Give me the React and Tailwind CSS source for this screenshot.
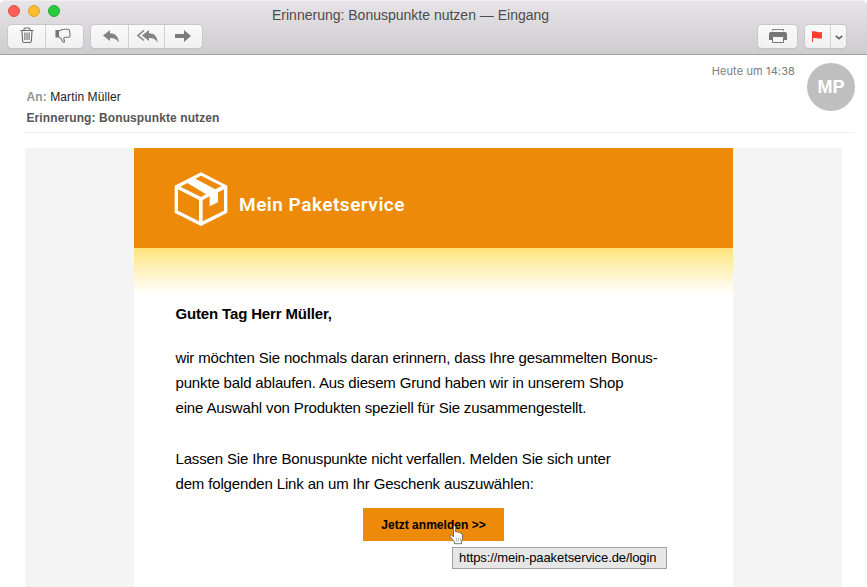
function ToolButton({ className, children }) {
  return <div className={`flex h-full justify-center ${className}`}>{children}</div>;
}

function Group({ className, children }) {
  return (
    <div className={`flex h-[23px] rounded-[4px] bg-gradient-to-b from-[#fbfafb] to-[#f1f0f1] shadow-[0_0_0_1px_#c9c7c9,0_1px_1px_#a9a7a9] ${className}`}>
      {children}
    </div>
  );
}

function Toolbar() {
  return (
    <header className="h-[55px] rounded-t-[5px] border-t border-b border-t-[#f1eff1] border-b-[#a3a1a3] bg-gradient-to-b from-[#e6e4e6] to-[#cfccd0]">
      <div className="flex h-6 items-start">
        <div className="flex w-[272px] gap-2 pt-1 pl-2">
          <span className="size-3 rounded-full border border-[#e2504a] bg-[#fd5e56]" />
          <span className="size-3 rounded-full border border-[#dfa032] bg-[#fdbd2e]" />
          <span className="size-3 rounded-full border border-[#1fae31] bg-[#28ca40]" />
        </div>
        <h1 className="pt-[5px] text-[14px] leading-[18px] whitespace-nowrap text-[#4c4b4c]">Erinnerung: Bonuspunkte nutzen — Eingang</h1>
      </div>
      <div className="flex pl-2">
        <Group className="w-[75px]">
          <ToolButton className="w-[38px] border-r border-[#d3d2d3] pt-[2px] pl-px">
            <svg width="16" height="18" viewBox="0 0 16 18" fill="none" stroke="#6b6b6b" strokeWidth="1.1">
              <path d="M1.500 3.500h13M5 3.500V2.200Q5 1 6.200 1H9.800Q11 1 11 2.200V3.500M3 3.500L3.600 14Q3.700 15.500 5 15.500H11Q12.300 15.500 12.400 14L13 3.500M5.900 5.500V13M8 5.500V13M10.100 5.500V13" />
            </svg>
          </ToolButton>
          <ToolButton className="w-[37px] pt-[3px] pr-[2px]">
            <svg width="17" height="16" viewBox="0 0 17 16" fill="none" stroke="#777" strokeWidth="1.1">
              <path d="M1 2.500H3.500V9H1Z" fill="#777" />
              <path d="M4 3Q7 1.200 9 1.200H13Q14.500 1.200 14.500 3L15.200 7.500Q15.200 9.200 13.500 9.200H10L8.600 10.500Q10 13 9.200 14.200Q8 14.500 7.200 12.700Q6 10 4 9" />
            </svg>
          </ToolButton>
        </Group>
        <Group className="ml-2 w-[111px]">
          <ToolButton className="w-[38px] border-r border-[#d3d2d3] pt-[5px] pl-[3px]">
            <svg width="16" height="13" viewBox="0 0 16 13" fill="#848384">
              <path d="M0 5.500L7 0V3.200C12.500 3.200 15.500 6.500 15.700 12.500C13.800 9.200 11.300 7.900 7 7.900V11Z" />
            </svg>
          </ToolButton>
          <ToolButton className="w-[36px] border-r border-[#d3d2d3] pt-[5px] pl-px">
            <svg width="21" height="13" viewBox="0 0 21 13" fill="#848384">
              <path d="M5 5.500L12 0V3.200C17.500 3.200 20.300 6.500 20.500 12.500C18.600 9.200 16.300 7.900 12 7.900V11Z" />
              <path d="M7 .5L1 5.500L7 10.500" fill="none" stroke="#848384" strokeWidth="1.500" />
            </svg>
          </ToolButton>
          <ToolButton className="w-[37px] pt-[5px] pr-[2px]">
            <svg width="16" height="12" viewBox="0 0 16 12" fill="#7b7a7b">
              <path d="M0 4H9V0L16 6L9 12V8H0Z" />
            </svg>
          </ToolButton>
        </Group>
        <Group className="ml-auto w-[39px]">
          <ToolButton className="w-full pt-[4px] pl-px">
            <svg width="18" height="15" viewBox="0 0 18 15">
              <path d="M3.500 2V.5H14.500V2" fill="none" stroke="#858485" />
              <path d="M2 3H16Q18 3 18 5V11H15V7H3V11H0V5Q0 3 2 3Z" fill="#777677" />
              <path d="M3.500 7.500H14.500V13.500H3.500Z" fill="#f8f8f8" stroke="#777677" />
            </svg>
          </ToolButton>
        </Group>
        <Group className="mr-[21px] ml-2 w-[41px]">
          <ToolButton className="w-[26px] border-r border-[#d3d2d3] pt-[6px]">
            <svg width="11" height="11" viewBox="0 0 11 11" fill="#ff3b30">
              <path d="M0 0H1V.5Q3-.2 5 .8Q7.500 1.800 10 1V7.300Q7.500 8.200 5 7.300Q3 6.600 1 7.200V11H0Z" />
            </svg>
          </ToolButton>
          <ToolButton className="w-[15px] pt-[10px]">
            <svg width="8" height="5" viewBox="0 0 8 5" fill="none" stroke="#666" strokeWidth="1.700">
              <path d="M.7 .8L4 3.700L7.300 .8" />
            </svg>
          </ToolButton>
        </Group>
      </div>
    </header>
  );
}

function MessageHeader() {
  return (
    <section className="mr-3 ml-6 flex h-[78px] border-b border-[#f1f1f1]">
      <div className="flex-1 pt-[33px] pl-[2.500px] text-[12px] leading-[18px] tracking-[0.1px] text-[#222]">
        <p><b className="text-[#949494]">An:</b> Martin Müller</p>
        <p className="mt-[3px] font-bold text-[#555]">Erinnerung: Bonuspunkte nutzen</p>
      </div>
      <time className='mr-3 pt-2 font-["Inter",sans-serif] text-[11px] leading-4 tracking-[0.12px] text-[#7b7b7b]'>Heute um 14:38</time>
      <div className="mt-2 flex size-12 items-center justify-center rounded-full bg-[#bfbfbf] pt-px text-[18px] font-bold text-white">MP</div>
    </section>
  );
}

function BoxLogo() {
  return (
    <svg width="54" height="54" viewBox="147 80 162 162">
      <path d="M228 81L307 121V202L228 242L149 202V121Z" fill="#fff" />
      <g fill="#ed8a0a">
        <path d="M159 132L222 164V228L159 196Z" />
        <path d="M233 164L254 153V183L279 171V141L297 132V196L233 228Z" />
        <path d="M166 124L187 113L243 147L228 155Z" />
        <path d="M211 100L228 91L290 122L271 132Z" />
      </g>
    </svg>
  );
}

function Mail() {
  return (
    <section className="mx-[25px] mt-[15px] h-[439px] bg-[#f4f4f4] px-[109px]">
      <div className="h-full bg-white">
        <div className="flex h-[100px] bg-[#ed8a0a] pt-6 pl-10">
          <BoxLogo />
          <span className='mt-[21px] ml-[11px] font-["Roboto",sans-serif] text-[19px] leading-6 font-semibold tracking-[0.5px] whitespace-nowrap text-white'>Mein Paketservice</span>
        </div>
        <div className="h-[47px] bg-gradient-to-b from-[#ffe47a] to-white" />
        <div className="h-[292px] pl-[41.500px] text-[15px] leading-[25px] tracking-[-0.155px] whitespace-nowrap text-black">
          <p className="pt-[6px] font-bold">Guten Tag Herr Müller,</p>
          <p className="mt-[19px]">wir möchten Sie nochmals daran erinnern, dass Ihre gesammelten Bonus-</p>
          <p>punkte bald ablaufen. Aus diesem Grund haben wir in unserem Shop</p>
          <p>eine Auswahl von Produkten speziell für Sie zusammengestellt.</p>
          <p className="mt-[26px]">Lassen Sie Ihre Bonuspunkte nicht verfallen. Melden Sie sich unter</p>
          <p>dem folgenden Link an um Ihr Geschenk auszuwählen:</p>
          <div className="relative mt-[12px] ml-[187.500px] h-[33px] w-[141px] bg-[#ed8a0a] text-center text-[12px] leading-[34px] font-bold tracking-[0.03px]">
            Jetzt anmelden &gt;&gt;
            <svg className="absolute top-[17px] left-[86px]" width="15" height="20" viewBox="0 0 15 20">
              <path d="M4.500 12V2Q4.500 .8 5.500 .8T6.600 2V7Q8.500 6 9.200 7.500Q11 6.800 11.600 8.200Q13.500 8 13.500 9.800V13Q13.500 15 12.500 16.500V18.700H5.500V17L1 11.500Q.5 9.500 2.500 9.800Z" fill="#fff" stroke="#555" strokeWidth=".8" />
              <path d="M7.500 13V16.500M9.500 13V16.500M11.500 13V16.500" stroke="#999" strokeWidth=".7" />
            </svg>
            <div className="absolute top-[39px] left-[89px] h-[22px] w-[215px] border border-[#a0a0a0] bg-[#e6e6e6] pl-[6px] text-left text-[13px] leading-[20px] font-normal tracking-[-0.1px]">https://mein-paaketservice.de/login</div>
          </div>
        </div>
      </div>
    </section>
  );
}

export default function App() {
  return (
    <main className='h-[587px] w-[867px] overflow-hidden bg-white font-["Liberation_Sans",Arial,sans-serif]'>
      <Toolbar />
      <MessageHeader />
      <Mail />
    </main>
  );
}
